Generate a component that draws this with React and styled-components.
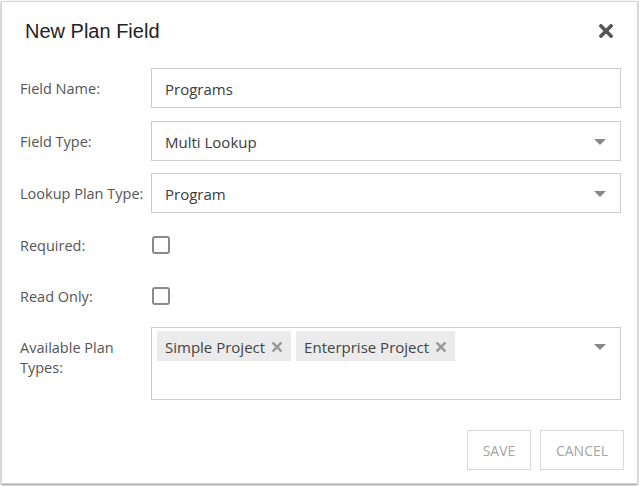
import styled, { createGlobalStyle } from "styled-components";

const GlobalStyle = createGlobalStyle`
	html, body {
		margin: 0;
		padding: 0;
		background: #fff;
	}
	body {
		font-family: "Open Sans", "Noto Sans", sans-serif;
	}
`;

const Page = styled.div`
	padding: 1px 0 0 1px;
	width: 639px;
	height: 486px;
	box-sizing: border-box;
`;

const Dialog = styled.div`
	width: 637px;
	height: 483px;
	box-sizing: border-box;
	border: 1px solid #d4d4d4;
	box-shadow: 0 1px 2px rgba(0, 0, 0, 0.45);
	background: #fff;
	display: flex;
	flex-direction: column;
`;

const Header = styled.div`
	height: 58px;
	display: flex;
	align-items: center;
	justify-content: space-between;
	padding: 0 24px 0 23px;
	box-sizing: border-box;
`;

const Title = styled.h1`
	margin: 0;
	font-family: "Liberation Sans", Arial, sans-serif;
	font-size: 20px;
	font-weight: normal;
	color: #222;
`;

const CloseButton = styled.button`
	border: 0;
	background: none;
	padding: 0;
	width: 14px;
	height: 14px;
	display: flex;
	cursor: pointer;
	color: #555;
`;

const Form = styled.div`
	padding: 8px 16px 0 18px;
	display: flex;
	flex-direction: column;
	gap: 13px;
`;

const Row = styled.div`
	display: flex;
	align-items: ${(p) => (p.$top ? "flex-start" : "center")};
	min-height: ${(p) => p.$height || 40}px;
	margin-top: ${(p) => p.$shift || 0}px;
`;

const Label = styled.label`
	width: 131px;
	flex: none;
	font-size: 14.5px;
	line-height: 20px;
	color: #555;
	padding-top: ${(p) => p.$pad || 2}px;
	padding-right: 20px;
	box-sizing: border-box;
	white-space: ${(p) => (p.$wrap ? "normal" : "nowrap")};
`;

const Input = styled.div`
	flex: 1;
	height: 40px;
	box-sizing: border-box;
	border: 1px solid #ccc;
	display: flex;
	align-items: center;
	justify-content: space-between;
	padding: 2px 14px 0 13px;
	font-size: 15px;
	color: #3a3a3a;
`;

const Arrow = styled.span`
	width: 0;
	height: 0;
	border-left: 6px solid transparent;
	border-right: 6px solid transparent;
	border-top: 6px solid #888;
	flex: none;
`;

const Check = styled.span`
	width: 18px;
	height: 18px;
	box-sizing: border-box;
	border: 2px solid #8a8a8a;
	border-radius: 3px;
	margin-left: 1px;
`;

const Multi = styled.div`
	flex: 1;
	height: 73px;
	box-sizing: border-box;
	border: 1px solid #ccc;
	padding: 3px 14px 0 5px;
	display: flex;
	align-items: flex-start;
`;

const Tags = styled.div`
	flex: 1;
	display: flex;
	gap: 5px;
`;

const Tag = styled.span`
	height: 30px;
	background: #ebebeb;
	display: flex;
	align-items: center;
	gap: 7px;
	padding: 1px 9px 0 8px;
	box-sizing: border-box;
	font-size: 15px;
	color: #444;
`;

const TagRemove = styled.span`
	display: flex;
	color: #9a9a9a;
`;

const MultiArrow = styled(Arrow)`
	margin-top: 13px;
`;

const Footer = styled.div`
	margin-top: auto;
	display: flex;
	justify-content: flex-end;
	gap: 9px;
	padding: 0 13px 13px 0;
`;

const Button = styled.button`
	height: 40px;
	width: ${(p) => p.$width}px;
	padding: 0;
	border: 1px solid #d9d9d9;
	background: #fff;
	font-family: "Open Sans", "Noto Sans", sans-serif;
	font-size: 14px;
	color: #a5a5a5;
	text-transform: uppercase;
	cursor: pointer;
`;

function Cross({ size = 14 }) {
	return (
		<svg width={size} height={size} viewBox="0 0 14 14">
			<path d="M2 2 L12 12 M12 2 L2 12" stroke="currentColor" strokeWidth="3.6" strokeLinecap="square" />
		</svg>
	);
}

export default function App() {
	return (
		<Page>
			<GlobalStyle />
			<Dialog>
				<Header>
					<Title>New Plan Field</Title>
					<CloseButton aria-label="Close">
						<Cross />
					</CloseButton>
				</Header>
				<Form>
					<Row>
						<Label>Field Name:</Label>
						<Input>Programs</Input>
					</Row>
					<Row>
						<Label>Field Type:</Label>
						<Input>
							Multi Lookup
							<Arrow />
						</Input>
					</Row>
					<Row $shift={-1}>
						<Label>Lookup Plan Type:</Label>
						<Input>
							Program
							<Arrow />
						</Input>
					</Row>
					<Row $height={37}>
						<Label>Required:</Label>
						<Check />
					</Row>
					<Row $height={37} $shift={1}>
						<Label>Read Only:</Label>
						<Check />
					</Row>
					<Row $top>
						<Label $wrap $pad={11}>Available Plan Types:</Label>
						<Multi>
							<Tags>
								<Tag>
									Simple Project
									<TagRemove>
										<Cross size={10} />
									</TagRemove>
								</Tag>
								<Tag>
									Enterprise Project
									<TagRemove>
										<Cross size={10} />
									</TagRemove>
								</Tag>
							</Tags>
							<MultiArrow />
						</Multi>
					</Row>
				</Form>
				<Footer>
					<Button $width={64}>Save</Button>
					<Button $width={84}>Cancel</Button>
				</Footer>
			</Dialog>
		</Page>
	);
}
